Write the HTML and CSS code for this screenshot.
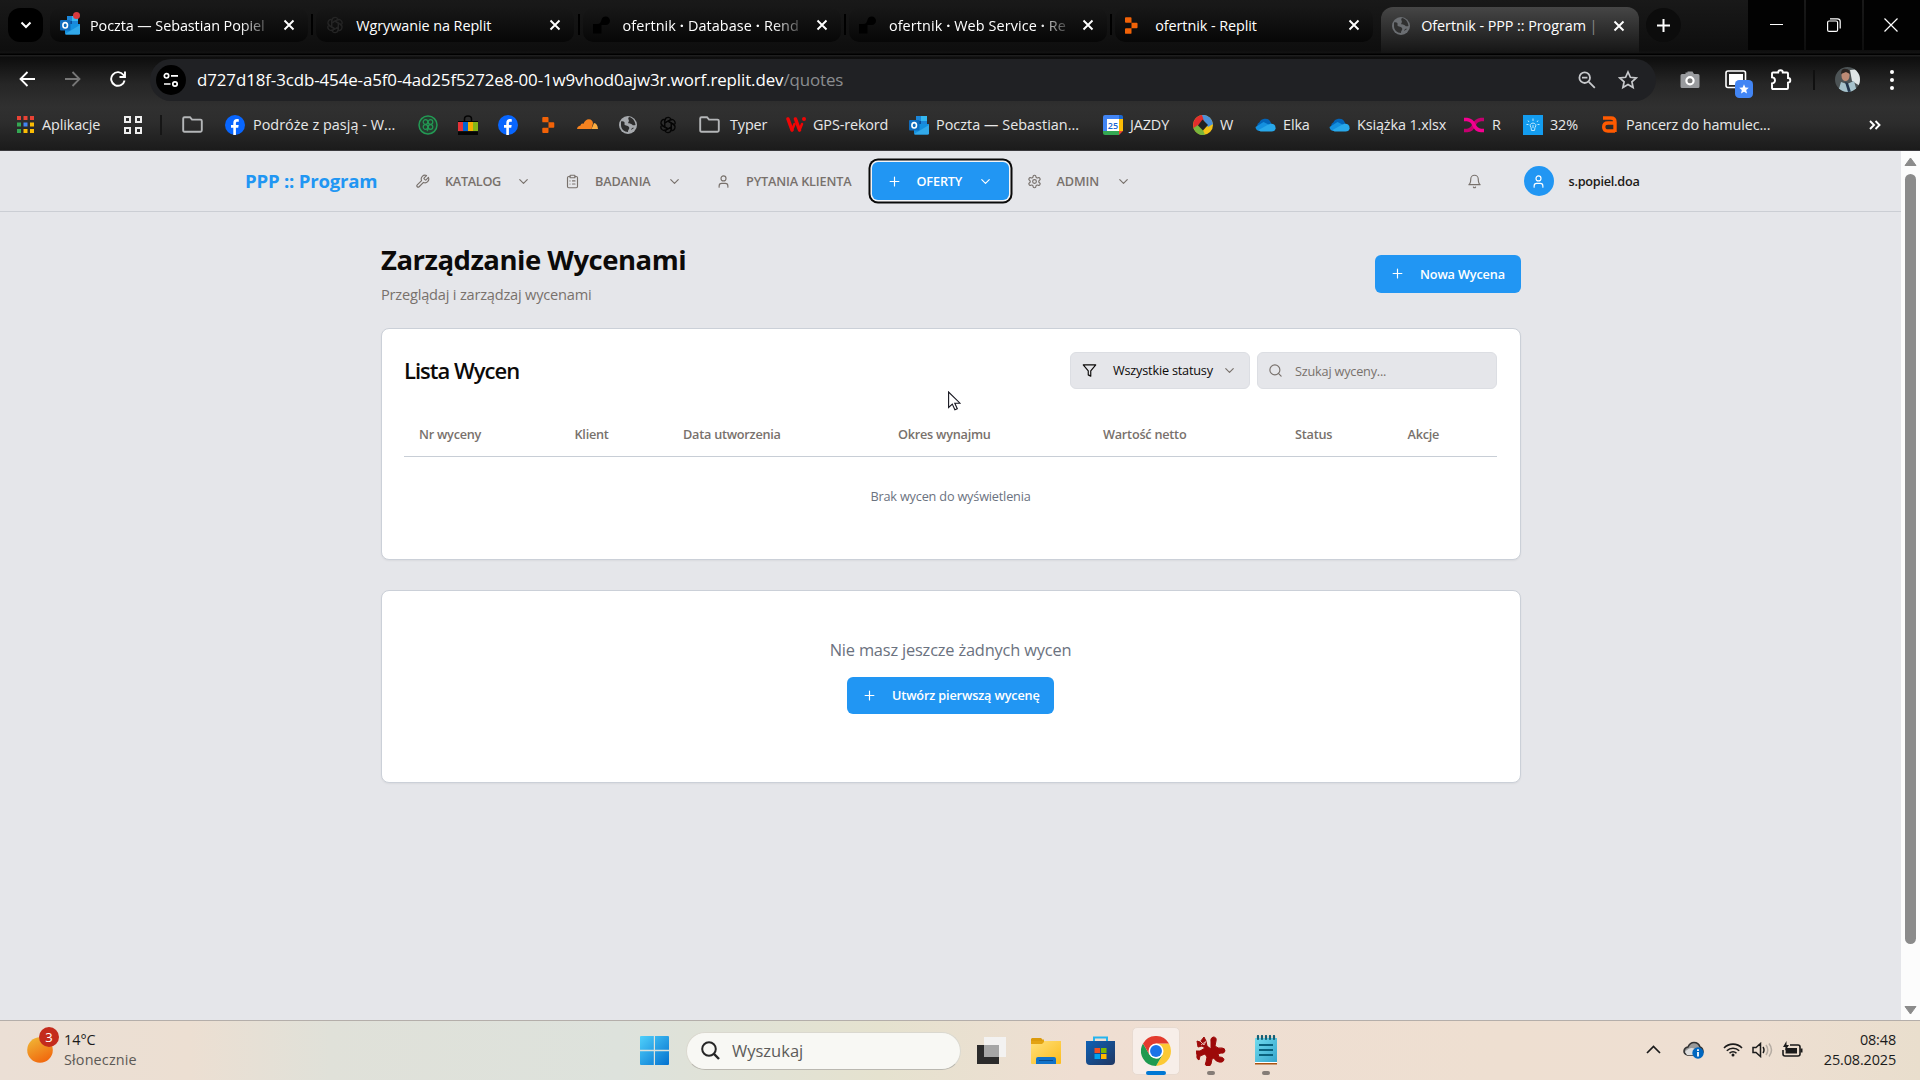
FILE: index.html
```html
<!DOCTYPE html>
<html lang="pl">
<head>
<meta charset="utf-8">
<title>Ofertnik - PPP :: Program</title>
<link rel="stylesheet" href="styles.css">
</head>
<body>
<svg class="defs" width="0" height="0">
  <defs>
    <linearGradient id="g-win" x1="0" y1="0" x2="1" y2="1"><stop offset="0" stop-color="#4fd0fb"/><stop offset="1" stop-color="#0371cf"/></linearGradient>
    <linearGradient id="g-sun" x1="0.2" y1="0" x2="0.7" y2="1"><stop offset="0" stop-color="#f0b535"/><stop offset="1" stop-color="#f1650c"/></linearGradient>
    <linearGradient id="g-folder" x1="0" y1="0" x2="1" y2="1"><stop offset="0" stop-color="#ffe07a"/><stop offset="1" stop-color="#fcbc1c"/></linearGradient>
    <linearGradient id="g-store" x1="0" y1="0" x2="1" y2="1"><stop offset="0" stop-color="#0f60b4"/><stop offset="1" stop-color="#1f3762"/></linearGradient>
    <linearGradient id="g-note" x1="0" y1="0" x2="1" y2="1"><stop offset="0" stop-color="#71dcee"/><stop offset="1" stop-color="#35a4cc"/></linearGradient>
  </defs>
  <symbol id="x" viewBox="0 0 12 12"><path d="M1.500 1.500l9 9M10.500 1.500l-9 9" fill="none" stroke="#fff" stroke-width="1.900"/></symbol>
  <symbol id="outlook" viewBox="0 0 20 20"><path d="M7 1h11v9H7z" fill="#1b86d9"/><path d="M12 1h6v5h-6z" fill="#35b8f1"/><path d="M7 6h5v5H7z" fill="#0a4f9a"/><path d="M5 9l15 0v9a1.500 1.500 0 0 1-1.500 1.500H6.500A1.500 1.500 0 0 1 5 18z" fill="#1490df"/><path d="M5 19l15-9v8.500q0 1-1.500 1H6z" fill="#32a9ea"/><rect y="5" width="10.500" height="10.500" rx="1" fill="#0f6cbd"/><ellipse cx="5.200" cy="10.300" rx="2.300" ry="2.700" fill="none" stroke="#fff" stroke-width="1.600"/></symbol>
  <symbol id="openai" viewBox="0 0 24 24"><g fill="none" stroke="currentColor" stroke-width="1.700"><path id="petal" d="M7.500 14.500V6.500a4.600 4.600 0 0 1 8.300-2.800M7.500 9.400l6.600-3.800a4.600 4.600 0 0 1 3.700-.3"/><use href="#petal" transform="rotate(60 12 12)"/><use href="#petal" transform="rotate(120 12 12)"/><use href="#petal" transform="rotate(180 12 12)"/><use href="#petal" transform="rotate(240 12 12)"/><use href="#petal" transform="rotate(300 12 12)"/></g></symbol>
  <symbol id="render" viewBox="0 0 18 18"><path d="M0 8h5q3 0 4-4.500Q10 0 13.500 0A4.300 4.300 0 1 1 13.500 9H9v9H0z" fill="#000"/></symbol>
  <symbol id="replit" viewBox="0 0 14 18"><path d="M1 0h5q1 0 1 1v5H1Q0 6 0 5V1q0-1 1-1zM7 6h5.500q1 0 1 1v4q0 1-1 1H7zM1 12h6v5q0 1-1 1H1q-1 0-1-1v-4q0-1 1-1z" fill="#f26207"/></symbol>
  <symbol id="globe" viewBox="0 0 20 20"><circle cx="10" cy="10" r="9" fill="currentColor"/><path d="M3 6.500c3-.5 4 .5 3.500 2.500s3.500 1 4.500 3-1 2-1 5c-4 0-7-3-7-7zM11 2c-2 2 1 3-.5 5s2 1 3.500 2.500 2 .5 3.500.500C17 5 14 2.500 11 2zM13 15c1-3 3-2 3-2z" fill="var(--hole,#2d2d2d)"/></symbol>
  <symbol id="facebook" viewBox="0 0 20 20"><circle cx="10" cy="10" r="10" fill="#0866ff"/><path d="M8.300 20v-7.200H6V9.900h2.300V8.200c0-3 1.500-4.400 4.200-4.200l1.300.2v2.500h-1.400c-1.200 0-1.500.6-1.500 1.500v1.700h2.800l-.5 2.900h-2.300V20z" fill="#fff"/></symbol>
  <symbol id="folder" viewBox="0 0 21 17"><path d="M2.500 1.200h5.500l2 2.400h8.500q1.300 0 1.300 1.300v9.300q0 1.500-1.300 1.500h-16q-1.300 0-1.300-1.500V2.600q0-1.400 1.300-1.400z" fill="none" stroke="#b4b6b8" stroke-width="1.900"/></symbol>
  <symbol id="onedrive" viewBox="0 0 20 14"><path d="M4.500 12.500A4.500 4.500 0 0 1 4 4.300 6.200 6.200 0 0 1 14.500 3l2 4L11 13z" fill="#0364b8"/><path d="M0 9l8-5 12 6v1q-1 2-3 2H4.500Q.5 13 0 9z" fill="#1490df"/><path d="M3 12l9-5 3-1.200A4 4 0 0 1 20 10q-.3 3.500-4 3.500H5z" fill="#28a8ea"/></symbol>
  <symbol id="plus" viewBox="0 0 24 24"><path d="M5 12h14M12 5v14"/></symbol>
  <symbol id="chev" viewBox="0 0 24 24"><path d="m6 9 6 6 6-6"/></symbol>
  <symbol id="user" viewBox="0 0 24 24"><path d="M19 21v-2a4 4 0 0 0-4-4H9a4 4 0 0 0-4 4v2"/><circle cx="12" cy="7" r="4"/></symbol>
  <symbol id="search" viewBox="0 0 24 24"><circle cx="11" cy="11" r="8"/><path d="m21 21-4.300-4.300"/></symbol>
</svg>

<div class="tabs">
  <button class="tab-menu"><svg width="12" height="8" viewBox="0 0 12 8"><path d="M1.500 1.500L6 6l4.500-4.500" fill="none" stroke="#fff" stroke-width="2"/></svg></button>
  <div class="tab"><span class="fav"><svg width="20" height="20"><use href="#outlook"/></svg><i class="fav-dot"></i></span><span class="tab-title fade">Poczta — Sebastian Popiel</span><svg class="close" width="12" height="12"><use href="#x"/></svg></div>
  <i class="tab-sep"></i>
  <div class="tab"><span class="fav dim"><svg width="18" height="18"><use href="#openai"/></svg></span><span class="tab-title">Wgrywanie na Replit</span><svg class="close" width="12" height="12"><use href="#x"/></svg></div>
  <i class="tab-sep"></i>
  <div class="tab"><span class="fav"><svg width="17" height="18"><use href="#render"/></svg></span><span class="tab-title fade wide-title">ofertnik <b>·</b> Database <b>·</b> Rend</span><svg class="close" width="12" height="12"><use href="#x"/></svg></div>
  <i class="tab-sep"></i>
  <div class="tab"><span class="fav"><svg width="17" height="18"><use href="#render"/></svg></span><span class="tab-title fade wide-title">ofertnik <b>·</b> Web Service <b>·</b> Re</span><svg class="close" width="12" height="12"><use href="#x"/></svg></div>
  <i class="tab-sep"></i>
  <div class="tab"><span class="fav"><svg width="13" height="17"><use href="#replit"/></svg></span><span class="tab-title">ofertnik - Replit</span><svg class="close" width="12" height="12"><use href="#x"/></svg></div>
  <div class="tab active"><span class="fav globe-fav"><svg width="20" height="20"><use href="#globe"/></svg></span><span class="tab-title">Ofertnik - PPP :: Program <em>|</em></span><svg class="close" width="12" height="12"><use href="#x"/></svg></div>
  <button class="new-tab"><svg width="13" height="13" viewBox="0 0 13 13"><path d="M6.500 0v13M0 6.500h13" stroke="#fff" stroke-width="2"/></svg></button>
  <div class="window-controls">
    <span><svg width="13" height="13" viewBox="0 0 13 13"><path d="M0 5.500h13" stroke="#fff"/></svg></span>
    <span><svg width="14" height="14" viewBox="0 0 14 14" fill="none" stroke="#fff" stroke-width="1.200"><rect x=".6" y="3" width="10" height="10.400" rx="1.500"/><path d="M3 .8h7.500q2.700 0 2.700 2.700v7"/></svg></span>
    <span><svg width="14" height="14" viewBox="0 0 14 14"><path d="M.5.5l13 13M13.500.5l-13 13" stroke="#fff" stroke-width="1.200"/></svg></span>
  </div>
</div>

<div class="toolbar">
  <div class="address-row">
    <div class="nav-buttons">
      <svg width="16" height="16" viewBox="0 0 16 16" fill="none" stroke="#fff" stroke-width="1.800"><path d="M16 8H2M8.500 1L1.500 8l7 7"/></svg>
      <svg width="16" height="16" viewBox="0 0 16 16" fill="none" stroke="#777" stroke-width="1.800"><path d="M0 8h14M7.500 1l7 7-7 7"/></svg>
      <svg width="16" height="16" viewBox="0 0 16 16" fill="none" stroke="#fff" stroke-width="1.900"><path d="M14.600 9.500A6.800 6.800 0 1 1 13.500 4L15 5.800M15 .5V6H9.500"/></svg>
    </div>
    <div class="omnibox">
      <span class="site-info"><svg width="16" height="16" viewBox="0 0 16 16" fill="none" stroke="#fff" stroke-width="1.700"><circle cx="3.500" cy="3.800" r="2.200"/><path d="M8 3.800h7M1 12h6.500"/><circle cx="12" cy="12" r="2.200"/></svg></span>
      <span class="url">d727d18f-3cdb-454e-a5f0-4ad25f5272e8-00-1w9vhod0ajw3r.worf.replit.dev<em>/quotes</em></span>
      <svg class="omni-zoom" width="18" height="18" viewBox="0 0 18 18" fill="none" stroke="#c7c9cc" stroke-width="1.800"><circle cx="6.700" cy="6.700" r="5.300"/><path d="M4 6.700h5.400M10.800 10.800l6 6"/></svg>
      <svg width="20" height="20" viewBox="0 0 20 20" fill="none" stroke="#c7c9cc" stroke-width="1.700"><path d="M10 2l2.400 5.300 5.800.6-4.300 3.900 1.200 5.700-5.100-2.900-5.100 2.900 1.200-5.700L1.800 7.900l5.800-.6z"/></svg>
    </div>
    <div class="extensions">
      <svg width="20" height="18" viewBox="0 0 20 18"><path d="M2 3h3.500V1.500h2V.5h5l1.500 2.500H18q1.500 0 1.500 1.500v11q0 1.500-1.500 1.500H2Q.5 17 .5 15.500v-11Q.5 3 2 3z" fill="#999b9e"/><circle cx="10" cy="9.800" r="3.600" fill="#777" stroke="#fff" stroke-width="2.200"/></svg>
      <span class="ext-window"><svg width="22" height="19" viewBox="0 0 22 19"><rect x="1" y="1" width="19.500" height="16.500" rx="2" fill="#222" stroke="#fff" stroke-width="1.600"/><path d="M4 4h14v7h-5v4H4z" fill="#fff"/></svg><svg class="ext-badge" width="18" height="18" viewBox="0 0 17 17"><rect width="17" height="17" rx="4" fill="#4285f4"/><path d="M8.500 4l1.300 3 3.200.3-2.400 2.200.7 3.200-2.800-1.700-2.800 1.700.7-3.200L4 7.300 7.200 7z" fill="#fff"/></svg></span>
      <svg width="21" height="21" viewBox="0 0 21 21"><path d="M2 3.500h5.200a2.300 2.300 0 0 1 4.600 0H16q1 0 1 1V9a2.200 2.200 0 0 1 0 4.600V19q0 1-1 1H2q-1 0-1-1v-4.600a2.900 2.900 0 0 0 0-6V4.500q0-1 1-1z" fill="none" stroke="#fff" stroke-width="1.900"/></svg>
      <i class="ext-sep"></i>
      <svg width="25" height="25" viewBox="0 0 25 25"><clipPath id="face"><circle cx="12.500" cy="12.500" r="12.500"/></clipPath><g clip-path="url(#face)"><path d="M0 0h25v25H0z" fill="#4c5355"/><path d="M15 3l10-1v17l-8-5z" fill="#dfe5e6"/><path d="M3 25l3-10 6 2 7-3 3 11z" fill="#a6c2cc"/><ellipse cx="10.500" cy="8.500" rx="4" ry="5.500" fill="#bd8b75"/><path d="M6 7q0-6 5-5 4 0 4 5l-4-2z" fill="#2b2522"/><path d="M10 15l3 1 3 9h-3z" fill="#22364d"/></g></svg>
      <svg width="6" height="22" viewBox="0 0 6 22" fill="#fff"><circle cx="3" cy="3" r="2"/><circle cx="3" cy="11" r="2"/><circle cx="3" cy="19" r="2"/></svg>
    </div>
  </div>
  <div class="bookmarks">
    <span class="bm"><svg width="17" height="17" viewBox="0 0 17 17"><path d="M0 0h4v4H0zM6.500 0h4v4h-4zM13 0h4v4h-4z" fill="#ea4335"/><path d="M0 6.500h4v4H0zM0 13h4v4H0z" fill="#34a853"/><path d="M6.500 6.500h4v4h-4z" fill="#4285f4"/><path d="M13 6.500h4v4h-4zM6.500 13h4v4h-4zM13 13h4v4h-4z" fill="#fbbc04"/></svg><b>Aplikacje</b></span>
    <span class="bm"><svg width="18" height="18" viewBox="0 0 18 18" fill="none" stroke="#eee" stroke-width="2"><path d="M1 1h5v5H1zM12 1h5v5h-5zM1 12h5v5H1zM12 12h5v5h-5z"/></svg></span>
    <i class="bm-sep"></i>
    <span class="bm"><svg width="21" height="17"><use href="#folder"/></svg></span>
    <span class="bm"><svg width="20" height="20"><use href="#facebook"/></svg><b class="long">Podróże z pasją - W...</b></span>
    <span class="bm"><svg width="20" height="20" viewBox="0 0 20 20" fill="none" stroke="#239a54"><circle cx="10" cy="10" r="9" fill="#263c30" stroke-width="1.500"/><g stroke-width="1.200"><circle cx="7.500" cy="7" r="2.300"/><circle cx="12.500" cy="7" r="2.300"/><circle cx="7.500" cy="12" r="2.300"/><circle cx="12.500" cy="12" r="2.300"/><path d="M9 16q2-2 1-6"/></g></svg></span>
    <span class="bm"><svg width="20" height="20" viewBox="0 0 20 20"><path d="M6.500 7V4q0-3 3.500-3t3.500 3v3" fill="none" stroke="#050505" stroke-width="1.500"/><path d="M0 7h5v9H0z" fill="#e53238"/><path d="M5 7h5v9H5z" fill="#0064d2"/><path d="M10 7h5v9h-5z" fill="#f5af02"/><path d="M15 7h5v9h-5z" fill="#86b817"/><path d="M0 16.500h20V20H0zM0 6h20v1H0z" fill="#050505"/></svg></span>
    <span class="bm"><svg width="20" height="20"><use href="#facebook"/></svg></span>
    <span class="bm"><svg width="13" height="16"><use href="#replit"/></svg></span>
    <span class="bm"><svg width="21" height="11" viewBox="0 0 21 11"><path d="M0 10q.3-3 3.500-3.500Q4 4 6.500 4.800 8.500 0 12 .2q3.500.3 4 4L14.500 10z" fill="#f6821f"/><path d="M14.500 10l2.500-6q3.500.5 4 6z" fill="#fbad41"/></svg></span>
    <span class="bm globe-bm"><svg width="20" height="20"><use href="#globe"/></svg></span>
    <span class="bm black"><svg width="18" height="18"><use href="#openai"/></svg></span>
    <span class="bm folder-bm"><svg width="21" height="17"><use href="#folder"/></svg><b>Typer</b></span>
    <span class="bm near"><svg width="20" height="15" viewBox="0 0 20 15" fill="none" stroke="#f00505" stroke-linecap="round"><path d="M2 2l4 11M9.500 2l4 11" stroke-width="3.500"/><path d="M6 13l2.500-6M13.500 13l2.500-6" stroke-width="2.500"/><path d="M18 2v.1" stroke-width="4"/></svg><b>GPS-rekord</b></span>
    <span class="bm near"><svg width="20" height="20"><use href="#outlook"/></svg><b class="long">Poczta — Sebastian...</b></span>
    <span class="bm near"><svg width="20" height="20" viewBox="0 0 20 20"><path d="M2 0h14v4H0V2q0-2 2-2z" fill="#4285f4"/><path d="M16 0h2q2 0 2 2v3h-4z" fill="#1967d2"/><path d="M0 4h4v12H0z" fill="#4285f4"/><path d="M16 4h4v12h-4z" fill="#fbbc04"/><path d="M0 16h16v4H2q-2 0-2-2z" fill="#34a853"/><path d="M16 16h4l-4 4z" fill="#ea4335"/><path d="M4 4h12v12H4z" fill="#fff"/><text x="10" y="14" text-anchor="middle" class="cal-day">25</text></svg><b>JAZDY</b></span>
    <span class="bm near"><svg width="20" height="20" viewBox="0 0 20 20"><circle cx="10" cy="10" r="10" fill="#f4c317"/><path d="M1 14A10 10 0 0 1 10 0l2 6-6 5z" fill="#e32d2d"/><path d="M9 0a10 10 0 0 1 11 9l-5 3-4-6z" fill="#4b91d8"/><path d="M.500 13A10 10 0 0 0 12 20l-2-5-5-5z" fill="#7ab63c"/><path d="M9.500 4.500l5.500 5.500-5 5.500-5-5z" fill="#222"/></svg><b>W</b></span>
    <span class="bm near"><svg width="21" height="14"><use href="#onedrive"/></svg><b>Elka</b></span>
    <span class="bm near"><svg width="21" height="14"><use href="#onedrive"/></svg><b>Książka 1.xlsx</b></span>
    <span class="bm near"><svg width="21" height="16" viewBox="0 0 21 16" fill="none" stroke-width="3.600"><path d="M0 13.500h3Q8 13 10 8t7-5.500h3" stroke="#c4006f"/><path d="M0 2.500h3Q8 3 10 8t7 5.500h3" stroke="#f50090"/></svg><b>R</b></span>
    <span class="bm near"><svg width="20" height="20" viewBox="0 0 20 20"><path d="M0 0h20v20H0z" fill="#139cef"/><path d="M8 12.500q-2.500-3.500 2-4.500 4.500 1 2 4.500l-.5 3h-3zM10 10v3M10 3.500V6M5 5.500l1 1.500M15 5.500L14 7M3.500 9.500h2M16.500 9.500h-2" fill="none" stroke="#bde9ff"/></svg><b>32%</b></span>
    <span class="bm allegro"><svg width="15" height="17" viewBox="0 0 15 17" fill="none" stroke="#ff5a00" stroke-width="3.400"><path d="M1 2h8q4 0 4 4v10M13 7H6Q1.700 7 1.700 11q0 4 4.300 4h7"/></svg><b>Pancerz do hamulec...</b></span>
    <span class="bm"><svg width="12" height="10" viewBox="0 0 12 10" fill="none" stroke="#fff" stroke-width="1.900"><path d="M1 1l4 4-4 4M6.500 1l4 4-4 4"/></svg></span>
  </div>
</div>

<div class="viewport">
  <div class="page">
    <header class="site-header">
      <span class="brand">PPP :: Program</span>
      <nav class="menu">
        <a class="mi katalog"><svg class="ic" viewBox="0 0 24 24"><path d="M14.700 6.300a1 1 0 0 0 0 1.400l1.600 1.600a1 1 0 0 0 1.400 0l3.770-3.770a6 6 0 0 1-7.940 7.940l-6.910 6.910a2.120 2.120 0 0 1-3-3l6.910-6.910a6 6 0 0 1 7.940-7.940l-3.760 3.760z"/></svg><span>KATALOG</span><svg class="ic"><use href="#chev"/></svg></a>
        <a class="mi badania"><svg class="ic" viewBox="0 0 24 24"><rect x="8" y="2" width="8" height="4" rx="1"/><path d="M16 4h2a2 2 0 0 1 2 2v14a2 2 0 0 1-2 2H6a2 2 0 0 1-2-2V6a2 2 0 0 1 2-2h2M12 11h4M12 16h4M8 11h.01M8 16h.01"/></svg><span>BADANIA</span><svg class="ic"><use href="#chev"/></svg></a>
        <a class="mi pytania"><svg class="ic"><use href="#user"/></svg><span>PYTANIA KLIENTA</span></a>
        <a class="mi oferty"><svg class="ic"><use href="#plus"/></svg><span>OFERTY</span><svg class="ic"><use href="#chev"/></svg></a>
        <a class="mi admin"><svg class="ic" viewBox="0 0 24 24"><path d="M12.220 2h-.44a2 2 0 0 0-2 2v.18a2 2 0 0 1-1 1.730l-.43.25a2 2 0 0 1-2 0l-.15-.08a2 2 0 0 0-2.730.73l-.22.38a2 2 0 0 0 .73 2.730l.15.1a2 2 0 0 1 1 1.720v.51a2 2 0 0 1-1 1.740l-.15.09a2 2 0 0 0-.73 2.730l.22.38a2 2 0 0 0 2.730.73l.15-.08a2 2 0 0 1 2 0l.43.25a2 2 0 0 1 1 1.730V20a2 2 0 0 0 2 2h.44a2 2 0 0 0 2-2v-.18a2 2 0 0 1 1-1.730l.43-.25a2 2 0 0 1 2 0l.15.08a2 2 0 0 0 2.730-.73l.22-.39a2 2 0 0 0-.73-2.730l-.15-.08a2 2 0 0 1-1-1.740v-.5a2 2 0 0 1 1-1.740l.15-.09a2 2 0 0 0 .73-2.730l-.22-.38a2 2 0 0 0-2.730-.73l-.15.08a2 2 0 0 1-2 0l-.43-.25a2 2 0 0 1-1-1.730V4a2 2 0 0 0-2-2z"/><circle cx="12" cy="12" r="3"/></svg><span>ADMIN</span><svg class="ic"><use href="#chev"/></svg></a>
      </nav>
      <svg class="ic bell" viewBox="0 0 24 24"><path d="M6 8a6 6 0 0 1 12 0c0 7 3 9 3 9H3s3-2 3-9M10.300 21a1.940 1.940 0 0 0 3.400 0"/></svg>
      <span class="user-avatar"><svg class="ic"><use href="#user"/></svg></span>
      <span class="user-name">s.popiel.doa</span>
    </header>

    <main class="content">
      <div class="heading">
        <div>
          <h1>Zarządzanie Wycenami</h1>
          <p class="lead">Przeglądaj i zarządzaj wycenami</p>
        </div>
        <button class="primary new-quote"><svg class="ic"><use href="#plus"/></svg><span>Nowa Wycena</span></button>
      </div>

      <section class="card list-card">
        <div class="list-top">
          <h2>Lista Wycen</h2>
          <div class="select"><svg class="ic" viewBox="0 0 24 24"><path d="M22 3H2l8 9.460V19l4 2v-8.540z"/></svg><span>Wszystkie statusy</span><svg class="ic muted"><use href="#chev"/></svg></div>
          <div class="search"><svg class="ic"><use href="#search"/></svg><span>Szukaj wyceny...</span></div>
        </div>
        <div class="thead"><span>Nr wyceny</span><span>Klient</span><span>Data utworzenia</span><span>Okres wynajmu</span><span>Wartość netto</span><span>Status</span><span>Akcje</span></div>
        <p class="empty-row">Brak wycen do wyświetlenia</p>
      </section>

      <section class="card empty-card">
        <p>Nie masz jeszcze żadnych wycen</p>
        <button class="primary first-quote"><svg class="ic"><use href="#plus"/></svg><span>Utwórz pierwszą wycenę</span></button>
      </section>
    </main>
  </div>
  <div class="scrollbar">
    <svg width="13" height="10" viewBox="0 0 13 10"><path d="M6.500 1L12 8.500H1z" fill="#8b8b8b" stroke="#8b8b8b" stroke-linejoin="round"/></svg>
    <i class="thumb"></i>
    <svg width="13" height="10" viewBox="0 0 13 10"><path d="M6.500 9L12 1.500H1z" fill="#8b8b8b" stroke="#8b8b8b" stroke-linejoin="round"/></svg>
  </div>
</div>

<div class="taskbar">
  <div class="weather">
    <span class="sun"><svg width="26" height="26" viewBox="0 0 26 26"><circle cx="13" cy="13" r="12.800" fill="url(#g-sun)"/></svg><i class="count">3</i></span>
    <div><div class="temp">14°C</div><div class="sky">Słonecznie</div></div>
  </div>
  <div class="apps">
    <svg class="start" width="29" height="29" viewBox="0 0 29 29"><path d="M1 0h12.800v13.800H0V1q0-1 1-1zM15 0h13q1 0 1 1v12.800H15zM0 15.200h13.800V29H1q-1 0-1-1zM15 15.200h14V28q0 1-1 1H15z" fill="url(#g-win)"/></svg>
    <div class="tb-search"><svg width="19" height="19" viewBox="0 0 19 19" fill="none" stroke="#262626" stroke-width="2"><circle cx="8" cy="8" r="6.800"/><path d="M12.700 12.700l5.300 5.300" stroke-width="2.400"/></svg><span>Wyszukaj</span></div>
    <div class="app"><svg width="30" height="30" viewBox="0 0 30 30"><path d="M1 9h22v19H1z" fill="#2b2b2b"/><path d="M8 1h22v20H8z" fill="#f4f4f4" fill-opacity=".9"/><path d="M8 9h15v12H8z" fill="#a6a6a6"/></svg></div>
    <div class="app"><svg width="30" height="28" viewBox="0 0 30 28"><path d="M1 1h9l3 3v4H0V2z" fill="#dc9a0b"/><path d="M0 4h30v22q0 1-1 1H1q-1 0-1-1z" fill="url(#g-folder)"/><path d="M0 4h11l2-2v3l-2 2H0z" fill="#e3a312"/><path d="M5 27v-5q0-2 2-2h16q2 0 2 2v5z" fill="#1173c9"/><path d="M8 23.500h14" stroke="#084b8d"/></svg></div>
    <div class="app"><svg width="29" height="30" viewBox="0 0 29 30"><path d="M8 7V1.500h13V7" fill="none" stroke="#26b4ee" stroke-width="2"/><path d="M0 5h29v20q0 4-4 4H4q-4 0-4-4z" fill="url(#g-store)"/><path d="M8.500 12h5.500v5H8.500z" fill="#f25022"/><path d="M15 12h5.500v5H15z" fill="#7fba00"/><path d="M8.500 18h5.500v5H8.500z" fill="#00a4ef"/><path d="M15 18h5.500v5H15z" fill="#ffb900"/></svg></div>
    <div class="app current"><svg width="30" height="30" viewBox="0 0 48 48"><path d="M24 12h20.800q3.200 6 3.200 12a24 24 0 0 1-24 24l10.400-18z" fill="#fcc934"/><path d="M3.200 12l10.400 18L24 36h4l6.400-6L24 48A24 24 0 0 1 3.200 12z" fill="#1e9a50"/><path d="M24 12h20.800A24 24 0 0 0 3.200 12l10.400 18z" fill="#e33b2e"/><circle cx="24" cy="24" r="12" fill="#fff"/><circle cx="24" cy="24" r="9.500" fill="#1a73e8"/></svg><i class="run wide"></i></div>
    <div class="app"><svg width="30" height="30" viewBox="0 0 30 30"><path d="M1 5l3 1 4-5 2 4 1 5 4 3V6q-1-4 2-5 4 0 3 4l-1 5q3 3 7 2 3 0 3 3-1 3-4 2l-3 1 1 3q5 0 5 3-1 3-5 2-4-1-5-4l-2 1-1 5q-1 3-4 2-3-1-1-4l1-5-2-3-5 2-1 4q-3-1-2-5l-1-4 4 0 5-3-3-2-4 1z" fill="#9d0909" stroke="#9d0909" stroke-width="1"/><path d="M4 5l4 4 2-4M5 9l4-3" stroke="#e6b2aa" fill="none"/></svg><i class="run"></i></div>
    <div class="app"><svg width="24" height="31" viewBox="0 0 24 31"><path d="M1 3h22v24H1z" fill="url(#g-note)"/><path d="M1 27h22v1H1z" fill="#fff"/><path d="M1 28h22v1.500H1z" fill="#a95210"/><path d="M4 1v3M8 1v3M12 1v3M16 1v3M20 1v3" stroke="#155f75" stroke-width="2.200" stroke-linecap="round"/><path d="M5 10h14M5 15h14M5 20h14" stroke="#09627e" stroke-width="2"/></svg><i class="run"></i></div>
  </div>
  <div class="tray">
    <svg width="15" height="9" viewBox="0 0 15 9" fill="none" stroke="#1b1b1b" stroke-width="1.700"><path d="M1 8l6.500-6.500L14 8"/></svg>
    <svg class="cloud" width="22" height="18" viewBox="0 0 22 18"><path d="M4.500 14Q1 13 1 10q.5-3.500 4-4Q7 1.500 11 1.500q4.500 0 6 4.500 3 1 3 5l-2 3z" fill="#999" stroke="#333" stroke-width="1.600"/><path d="M2 11q5-6 10-3l1 6H4z" fill="#ddd"/><circle cx="15" cy="12" r="5.700" fill="#0067c0"/><path d="M15 8.300v1.700M15 11v4.500" stroke="#fff" stroke-width="1.800"/></svg>
    <svg width="20" height="15" viewBox="0 0 20 15" fill="none" stroke="#1b1b1b" stroke-width="1.600"><path d="M1 6a12.500 12.500 0 0 1 18 0M3.800 8.800a8.700 8.700 0 0 1 12.400 0M6.500 11.300a5 5 0 0 1 7 0"/><circle cx="10" cy="13" r="1.500" fill="#1b1b1b" stroke="none"/></svg>
    <svg width="21" height="16" viewBox="0 0 21 16" fill="none" stroke="#1b1b1b" stroke-width="1.500"><path d="M1 5.500h3L8.500 1.500v13L4 10.500H1zM11 5q2 3 0 6"/><path d="M14 3q3.500 5 0 10M17 1.500q5 6.500 0 13" stroke="#b5aca3"/></svg>
    <svg width="21" height="17" viewBox="0 0 21 17"><path d="M8 4h8q2 0 2 2v7q0 2-2 2H3q-2 0-2-2V9" fill="none" stroke="#1b1b1b" stroke-width="1.600"/><path d="M4 7h11v5.500H3.500z" fill="#1b1b1b"/><path d="M18.500 7.500h2v4h-2zM4.500 0L1 6h2.500L3 10l4-6H4.500z" fill="#1b1b1b"/></svg>
    <div class="clock"><div>08:48</div><div>25.08.2025</div></div>
  </div>
</div>
<svg class="cursor" width="13" height="20" viewBox="0 0 13 20"><path d="M.6 1v15.500l3.700-3.400 2.600 5.600 2.400-1L6.800 12.200H12z" fill="#fff" stroke="#15151f" stroke-width="1.100"/></svg>
</body>
</html>
```
FILE: styles.css
```css
* { box-sizing: border-box; }
body {
  margin: 0; width: 1920px; height: 1080px; overflow: hidden;
  display: flex; flex-direction: column;
  font-family: "Open Sans", "Noto Sans", sans-serif;
  font-size: 14.4px; line-height: 1; white-space: nowrap; background: #e5e6ea;
}
svg { display: block; flex: none; }
.defs { position: absolute; }
h1, h2, p { margin: 0; }
em, i { font-style: normal; }
button { border: 0; padding: 0; font: inherit; color: inherit; display: flex; align-items: center; }

/* browser tabs */
.tabs {
  flex: none; height: 57px; padding: 8px 0 0 8px; display: flex; align-items: flex-start; color: #fff;
  background: linear-gradient(#191919 0, #0e0e0e 50px, #131313 53px, #000 54px, #000 55px, #222 55px, #111 57px);
}
.tab-menu { width: 35px; height: 34px; border-radius: 12px; background: #000; justify-content: center; margin-right: 7px; }
.tab { width: 258px; height: 34px; border-radius: 10px; padding: 0 13px 0 10px; display: flex; align-items: center; background: linear-gradient(#171717, #070707); }
.tab-sep { width: 2px; height: 21px; margin: 6px 3px 0 3.300px; background: #000; }
.fav { position: relative; width: 30px; color: #777; }
.fav.dim { color: #252525; }
.fav-dot { position: absolute; left: 13px; top: -3px; width: 7px; height: 7px; border-radius: 50%; background: #d93a3d; }
.tab-title { width: 180px; padding-top: 1px; line-height: 22px; letter-spacing: -.07px; }
.wide-title { letter-spacing: .1px; }
.tab-title em { color: #888; }
.fade { -webkit-mask-image: linear-gradient(90deg, #000 150px, rgba(0,0,0,.2) 178px); mask-image: linear-gradient(90deg, #000 150px, rgba(0,0,0,.2) 178px); }
.close { margin-left: auto; }
.tab.active { height: 46px; margin: -1px -1px 0 8px; padding: 0 14px 9px 10px; border-radius: 12px 12px 0 0; background: linear-gradient(#464646, #151515); }
.globe-fav { color: #6b6e72; --hole: #303030; }
.new-tab { width: 35px; height: 34px; border-radius: 50%; justify-content: center; background: #0c0c0c; margin-left: 8px; }
.window-controls { margin: -8px 0 0 auto; display: flex; gap: 2px; }
.window-controls span { width: 56px; height: 50px; background: #020202; display: flex; align-items: center; justify-content: center; }
.window-controls span:last-child { padding-right: 2px; }
.window-controls span:first-child { padding-left: 1px; }

/* browser toolbar */
.toolbar { flex: none; height: 94px; border-bottom: 1px solid #3b3a3e; background: linear-gradient(#0d0d0d, #262626 27px, #303030 50px, #2d2d2d 65px, #1b1b1b); }
.address-row { height: 44px; display: flex; padding-top: 1px; align-items: center; }
.nav-buttons { width: 150px; padding: 0 0 2px 19px; display: flex; gap: 29.500px; }
.omnibox { width: 1506px; height: 42px; border-radius: 21px; background: #202124; display: flex; align-items: center; padding: 0 18px 0 6px; }
.site-info { width: 30px; height: 30px; border-radius: 50%; background: #000; display: flex; align-items: center; justify-content: center; margin-right: 11px; }
.url { flex: 1; color: #fff; font-size: 16.9px; line-height: 26px; letter-spacing: -.1px; }
.url em { color: #8b8d90; }
.omni-zoom { margin-right: 22px; }
.extensions { flex: 1; display: flex; align-items: center; padding-left: 24px; }
.ext-window { position: relative; margin: 0 24px 0 25px; }
.ext-badge { position: absolute; left: 10px; top: 10px; }
.ext-sep { width: 2px; height: 20px; background: #101010; margin: 0 20px 0 21px; }
.extensions > svg:last-child { margin-left: 29px; }
.bookmarks {
  height: 47px; padding-left: 17px; display: grid; align-items: center; color: #e8e8e8;
  grid-template-columns: 107px 36px 22px 43px 193px 40px 40px 44px 35px 41px 41px 40px 87px 123px 194px 90px 62px 74px 135px 59px 79px 267px 20px;
}
.bm { display: flex; align-items: center; gap: 8px; }
.bm.near { gap: 7px; }
.bm.allegro { gap: 9px; }
.bm.folder-bm { gap: 10px; }
.bm b { font-weight: 400; line-height: 22px; font-size: 14.4px; letter-spacing: -.12px; }
.bm b.long { letter-spacing: .03px; }
.bm-sep { width: 2px; height: 20px; background: #161616; }
.globe-bm { color: #a6a9ad; }
.black { color: #050505; }
.cal-day { font: 600 9px "Open Sans", sans-serif; fill: #1967d2; }

/* web page */
.viewport { flex: none; height: 869px; display: flex; }
.page { width: 1901px; }
.scrollbar { width: 19px; background: #fcfcfc; padding: 6px 0 5px; display: flex; flex-direction: column; align-items: center; }
.thumb { width: 11px; height: 770px; border-radius: 6px; background: #8b8b8b; margin: 7px 0 auto; }
.ic { width: 15px; height: 15px; fill: none; stroke: currentColor; stroke-width: 1.850; stroke-linecap: round; stroke-linejoin: round; }
.site-header { height: 61px; border-bottom: 1px solid #cbced4; padding-left: 245px; display: flex; align-items: center; color: #78716c; font-size: 12.700px; font-weight: 600; }
.brand { width: 154px; color: #2196f3; font-size: 18.600px; font-weight: 700; line-height: 28px; letter-spacing: -.22px; }
.menu { display: flex; align-items: center; }
.mi { height: 38px; display: flex; align-items: center; padding-left: 16px; line-height: 20px; font-weight: 600; letter-spacing: -.15px; }
.mi > span { margin-left: 15px; flex: 1; padding-bottom: 1px; }
.katalog { width: 150px; padding-right: 18px; }
.katalog > span { letter-spacing: -.3px; }
.badania { width: 151px; padding-right: 18px; }
.pytania { width: 171.500px; }
.oferty { width: 137px; padding: 0 16px 0 15px; border-radius: 6px; background: #2196f3; color: #fff; box-shadow: 0 0 0 1.500px #f3f4f6, 0 0 0 3.500px #0a0a0a; }
.admin { width: 137px; margin-left: 2px; padding-right: 17px; }
.bell { margin-left: 319px; }
.user-avatar { width: 30px; height: 30px; border-radius: 50%; margin: 0 15px 0 42px; background: #2196f3; color: #fff; display: flex; align-items: center; justify-content: center; }
.user-name { color: #1c1917; font-weight: 600; padding-bottom: 1px; line-height: 20px; letter-spacing: -.25px; }
.content { width: 1140px; margin-left: 381px; padding-top: 30px; }
.heading { height: 86px; display: flex; justify-content: space-between; align-items: flex-start; }
h1 { font-size: 27.500px; line-height: 36px; font-weight: 700; color: #0c0a09; letter-spacing: -.5px; }
.lead { font-size: 14.600px; line-height: 22px; letter-spacing: -.2px; margin-top: 5px; color: #78716c; }
.primary { background: #2196f3; color: #fff; border-radius: 6px; font-size: 12.700px; font-weight: 600; letter-spacing: -.15px; }
.primary span { line-height: 20px; padding-bottom: 2px; }
.new-quote { width: 146px; height: 38px; margin-top: 13px; padding-left: 15px; gap: 15px; }
.primary.new-quote span { padding-bottom: 1px; }
.new-quote svg { margin-bottom: 1px; }
.card { background: #fff; border: 1px solid #cbd0d8; border-radius: 8px; box-shadow: 0 1px 2px rgba(0,0,0,.05); }
.list-card { height: 232px; padding: 22px 23px 0 22px; }
.list-top { display: flex; align-items: center; height: 39px; }
h2 { font-size: 22px; line-height: 30px; font-weight: 600; letter-spacing: -1px; color: #0c0a09; flex: 1; padding-bottom: 1px; }
.select, .search { height: 37px; border: 1px solid #dcdee3; background: #e5e6ea; border-radius: 6px; display: flex; align-items: center; font-size: 12.700px; line-height: 20px; letter-spacing: -.2px; }
.select { width: 180px; margin-right: 7px; padding: 0 12px 0 11px; color: #0c0a09; }
.select span { flex: 1; margin-left: 16px; padding-bottom: 1px; }
.muted { color: #78716c; }
.search { width: 240px; padding-left: 10px; color: #78716c; gap: 12px; }
.thead { height: 43px; margin-top: 24px; padding: 0 0 2px 15px; border-bottom: 1px solid #c8ced6; display: grid; align-items: center; grid-template-columns: 155.500px 108.500px 215px 205px 192px 112.500px 1fr; color: #78716c; font-size: 12.700px; font-weight: 600; line-height: 20px; letter-spacing: -.24px; }
.empty-row { margin-top: 29px; text-align: center; color: #6b7280; font-size: 12.700px; line-height: 20px; letter-spacing: -.18px; }
.empty-card { margin-top: 30px; height: 193px; padding: 46px 1px 0 0; display: flex; flex-direction: column; align-items: center; }
.empty-card p { color: #6b7280; font-size: 16.400px; line-height: 26px; letter-spacing: -.18px; }
.first-quote { width: 207px; height: 37px; margin-top: 14px; padding-left: 15px; gap: 15px; }

/* taskbar */
.taskbar {
  flex: none; height: 60px; border-top: 1px solid #b4aeaa; display: flex; color: #1b1b1b;
  background: linear-gradient(90deg, #ebdfd5 0, #ecdfd2 190px, #e0e1d9 330px, #dde2dc 620px, #e5e2cf 880px, #efded2 1080px, #eedfd1 1500px, #eedfd2 1750px, #e9decd 1920px);
}
.weather { width: 640px; padding: 0 0 2px 27px; display: flex; align-items: center; gap: 11px; line-height: 20px; }
.sun { position: relative; }
.count { position: absolute; left: 12px; top: -10px; width: 20px; height: 20px; border-radius: 50%; background: #c42b1c; color: #fff; text-align: center; font-size: 13px; }
.sky { color: #5c5955; letter-spacing: .15px; }
.apps { display: flex; align-items: center; }
.tb-search { width: 275px; height: 38px; margin: 0 2px 0 17px; border-radius: 19px; border: 1px solid #dad8cf; border-bottom-color: #bab8b0; background: #f8f8f4; display: flex; align-items: center; padding-left: 14px; gap: 12px; font-size: 16.500px; line-height: 24px; color: #5d5c5a; }
.app { position: relative; width: 48px; height: 48px; margin: 0 3.500px; display: flex; align-items: center; justify-content: center; }
.current { background: #f7eee9; border: 1px solid #e8dad0; border-radius: 5px; }
.run { position: absolute; bottom: 0; left: 20px; width: 8px; height: 4px; border-radius: 2px; background: #857c76; }
.run.wide { left: 13px; bottom: -1px; width: 20px; background: #0078d4; }
.tray { margin-left: auto; padding: 0 24px 2px 0; display: flex; align-items: center; }
.cloud { margin: 0 18px 0 22px; }
.tray svg:nth-child(4) { margin: 0 9px; }
.clock { margin-left: 21px; text-align: right; line-height: 20px; font-size: 14.400px; letter-spacing: -.12px; }

.cursor { position: absolute; left: 948px; top: 391px; }
```
